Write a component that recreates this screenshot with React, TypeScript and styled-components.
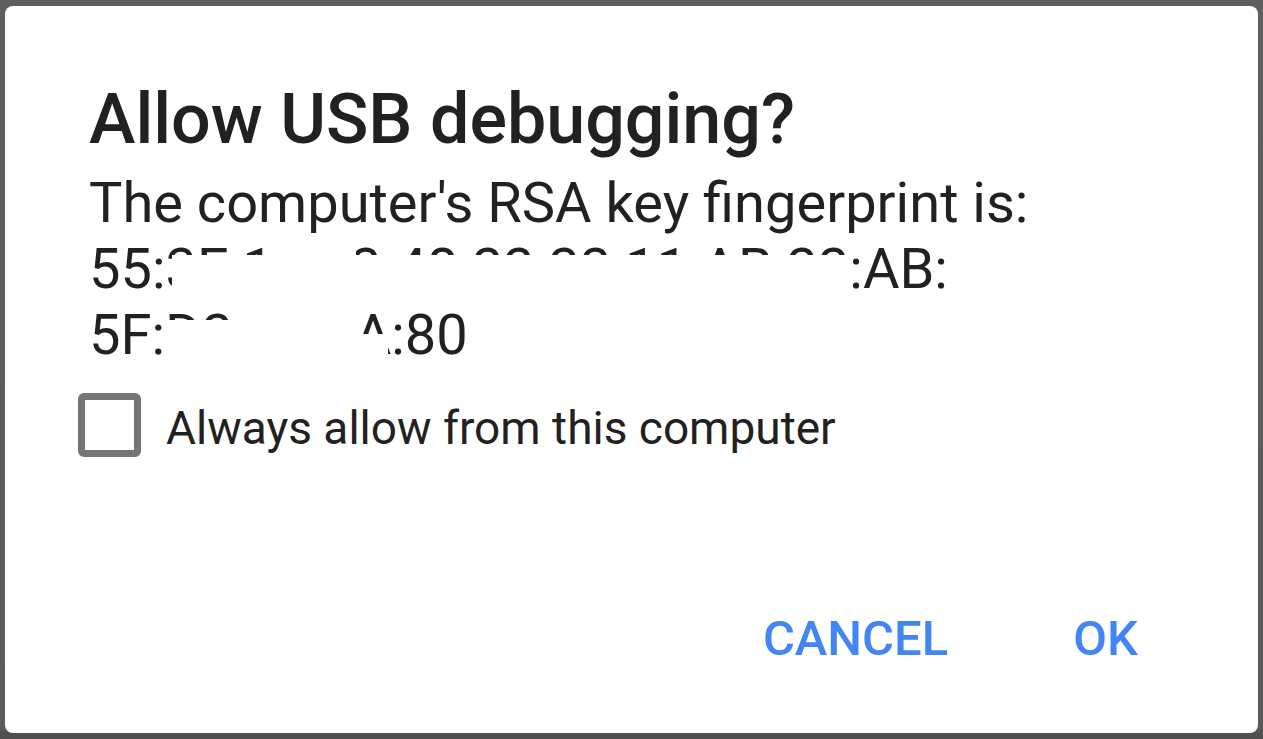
import React from "react";
import styled, { createGlobalStyle } from "styled-components";

const Global = createGlobalStyle`
  html, body {
    margin: 0;
    padding: 0;
    width: 1263px;
    height: 739px;
    overflow: hidden;
    background: #5b5b5b;
    font-family: Roboto, "Noto Sans", "Liberation Sans", sans-serif;
    -webkit-font-smoothing: antialiased;
  }
`;

const Backdrop = styled.div`
  box-sizing: border-box;
  width: 1263px;
  height: 739px;
  padding: 6px 5px 6px 5px;
  background: linear-gradient(to bottom, #5f5f5f 0, #5a5a5a 728px, #4f4f4f 733px, #4f4f4f 739px);
  display: flex;
`;

const Dialog = styled.div`
  flex: 1;
  background: #ffffff;
  border-radius: 8px;
  display: flex;
  flex-direction: column;
  padding: 78px 0 70px 84px;
  box-sizing: border-box;
`;

const Title = styled.h1`
  margin: 0;
  font-size: 70px;
  line-height: 70px;
  font-weight: 500;
  color: #212121;
  letter-spacing: 0;
`;

const Body = styled.div`
  margin-top: 16px;
  font-size: 56px;
  line-height: 66px;
  color: #212121;
`;

const Line = styled.div`
  position: relative;
  white-space: nowrap;
`;

const Mask = styled.span<{ $left: number; $width: number; $top: number }>`
  position: absolute;
  left: ${(p) => p.$left}px;
  width: ${(p) => p.$width}px;
  top: ${(p) => p.$top}px;
  bottom: 0;
  background: #ffffff;
`;

const CheckRow = styled.label`
  display: flex;
  align-items: center;
  gap: 25px;
  margin-top: 25px;
  margin-left: -11px;
`;

const Box = styled.span`
  box-sizing: border-box;
  width: 63px;
  height: 64px;
  border: 7px solid #757575;
  border-radius: 6px;
  flex: none;
`;

const CheckLabel = styled.span`
  font-size: 46px;
  line-height: 56px;
  padding-top: 6px;
  color: #212121;
`;

const Actions = styled.div`
  margin-top: auto;
  display: flex;
  justify-content: flex-end;
  gap: 125px;
  padding-right: 120px;
`;

const ActionButton = styled.button`
  border: none;
  background: none;
  padding: 0;
  margin: 0;
  font-family: Roboto, "Noto Sans", "Liberation Sans", sans-serif;
  font-size: 49px;
  line-height: 49px;
  font-weight: 500;
  color: #4285f4;
  text-transform: uppercase;
`;

type MaskSpec = { left: number; width: number; top: number };

const fingerprint: { text: string; masks: MaskSpec[] }[] = [
  {
    text: "55:3E:19:23:48:33:33:11:AB:33:AB:",
    masks: [
      { left: 83, width: 94, top: 19 },
      { left: 176, width: 91, top: 0 },
      { left: 266, width: 494, top: 19 },
    ],
  },
  {
    text: "5F:D3:93:4A:80",
    masks: [
      { left: 79, width: 69, top: 18 },
      { left: 147, width: 113, top: 0 },
      { left: 259, width: 40, top: 32 },
    ],
  },
];

export default function App() {
  return (
    <>
      <Global />
      <Backdrop>
        <Dialog>
          <Title>Allow USB debugging?</Title>
          <Body>
            <Line>The computer's RSA key fingerprint is:</Line>
            {fingerprint.map((l, i) => (
              <Line key={i}>
                {l.text}
                {l.masks.map((m, j) => (
                  <Mask key={j} $left={m.left} $width={m.width} $top={m.top} />
                ))}
              </Line>
            ))}
          </Body>
          <CheckRow>
            <Box />
            <CheckLabel>Always allow from this computer</CheckLabel>
          </CheckRow>
          <Actions>
            <ActionButton>Cancel</ActionButton>
            <ActionButton>OK</ActionButton>
          </Actions>
        </Dialog>
      </Backdrop>
    </>
  );
}
